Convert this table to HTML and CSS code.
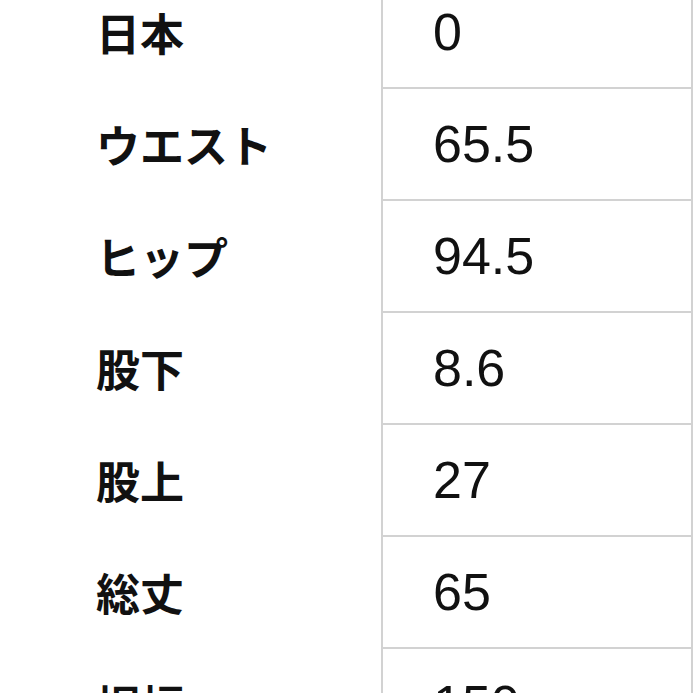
FILE: index.html
```html
<!DOCTYPE html>
<html lang="ja">
<head>
<meta charset="utf-8">
<link rel="stylesheet" href="styles.css">
</head>
<body>
<table class="size-table">
  <tr><th>日本</th><td>0</td></tr>
  <tr><th>ウエスト</th><td>65.5</td></tr>
  <tr><th>ヒップ</th><td>94.5</td></tr>
  <tr><th>股下</th><td>8.6</td></tr>
  <tr><th>股上</th><td>27</td></tr>
  <tr><th>総丈</th><td>65</td></tr>
  <tr><th>裾幅</th><td>150</td></tr>
</table>
</body>
</html>
```
FILE: styles.css
```css
html, body {
  margin: 0;
  padding: 0;
  background: #ffffff;
  overflow: hidden;
}
.size-table {
  border-collapse: collapse;
  margin-top: -24px;
  width: 693px;
  table-layout: fixed;
}
.size-table tr {
  height: 112px;
}
.size-table th {
  width: 382px;
  padding: 0 0 0 96px;
  text-align: left;
  font-family: "Noto Sans CJK JP", "Noto Sans", sans-serif;
  font-weight: 700;
  font-size: 44px;
  color: #111111;
  vertical-align: middle;
  box-sizing: border-box;
}
.size-table td {
  padding: 0 0 0 50px;
  font-family: "Liberation Sans", Arial, sans-serif;
  font-size: 52px;
  color: #111111;
  vertical-align: middle;
  border-left: 2px solid #d2d2d2;
  border-right: 2px solid #d2d2d2;
  border-bottom: 2px solid #d2d2d2;
}
```
